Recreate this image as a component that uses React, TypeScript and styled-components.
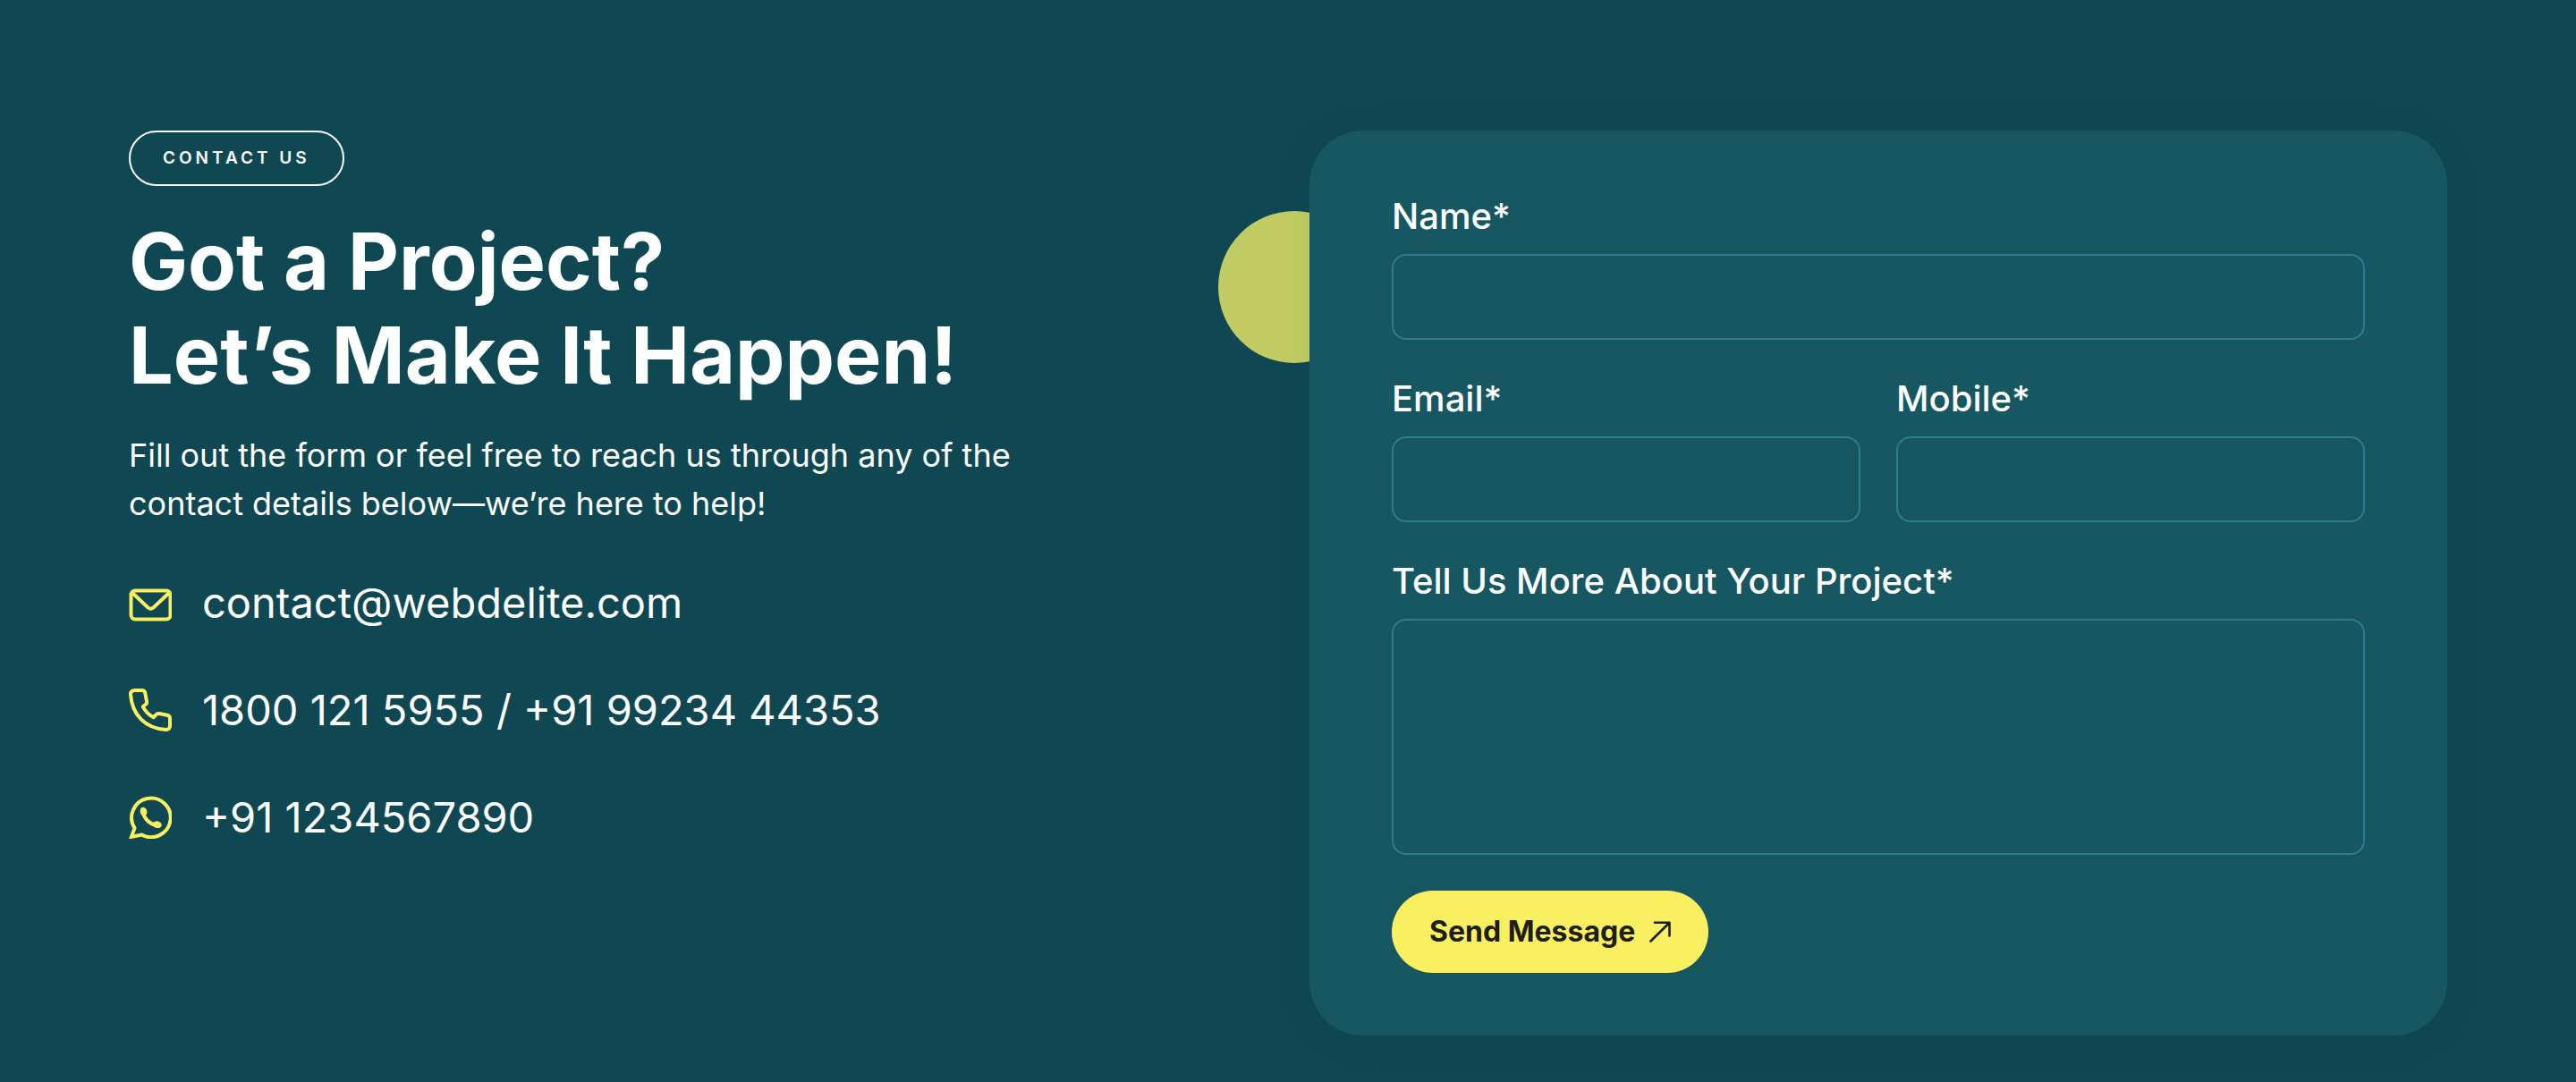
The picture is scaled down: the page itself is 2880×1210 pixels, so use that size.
import React from "react";
import styled, { createGlobalStyle } from "styled-components";

const GlobalStyle = createGlobalStyle`
  *, *::before, *::after { box-sizing: border-box; }
  body {
    margin: 0;
    background: #0f4853;
    color: #fcfdfd;
    font-family: Inter, "Liberation Sans", sans-serif;
  }
`;

const Section = styled.section`
  display: grid;
  grid-template-columns: 1fr 1fr;
  gap: 48px;
  align-items: start;
  min-height: 100vh;
  padding: 146px 5% 52px;
`;

const Intro = styled.div`
  display: flex;
  flex-direction: column;
  align-items: flex-start;
`;

const Tag = styled.span`
  padding: 14px 36px;
  border: 2px solid #fcfdfd;
  border-radius: 32px;
  font-size: 19px;
  line-height: 30px;
  font-weight: 600;
  letter-spacing: 4px;
  text-transform: uppercase;
`;

const Heading = styled.h2`
  margin: 32px 0 32px;
  font-size: 88px;
  line-height: 105px;
  font-weight: 700;
`;

const Lead = styled.p`
  margin: 0;
  max-width: 1020px;
  font-size: 36px;
  line-height: 54px;
`;

const ContactList = styled.ul`
  display: flex;
  flex-direction: column;
  gap: 48px;
  margin: 48px 0 0;
  padding: 0;
  list-style: none;
`;

const ContactRow = styled.li`
  display: flex;
  align-items: center;
  gap: 34px;
  font-size: 47px;
  line-height: 72px;
  font-weight: 400;

  svg {
    flex: none;
    width: 48px;
    height: 48px;
    color: #f8f060;
  }
`;

const ContactLink = styled.a`
  color: inherit;
  text-decoration: none;
`;

const FormArea = styled.div`
  position: relative;
`;

const Disc = styled.span`
  position: absolute;
  top: 90px;
  left: -102px;
  width: 170px;
  height: 170px;
  border-radius: 50%;
  background: #c0cc63;
`;

const Card = styled.form`
  position: relative;
  display: grid;
  grid-template-columns: 1fr 1fr;
  gap: 36px 40px;
  padding: 66px 92px 70px;
  border-radius: 60px;
  background: #165762;
  box-shadow: 0 4px 50px rgba(0, 0, 0, 0.05);
`;

const Field = styled.div<{ $wide?: boolean }>`
  display: flex;
  flex-direction: column;
  gap: 12px;
  grid-column: ${(p) => (p.$wide ? "1 / -1" : "auto")};
`;

const Label = styled.label`
  font-size: 40px;
  line-height: 60px;
  font-weight: 500;
`;

const Input = styled.input`
  width: 100%;
  height: 96px;
  padding: 0 28px;
  border: 2px solid #2a8091;
  border-radius: 16px;
  background: transparent;
  color: inherit;
  font: inherit;
  font-size: 36px;
`;

const TextArea = styled(Input)`
  display: block;
  height: 264px;
  padding: 24px 28px;
  resize: none;
`;

const Send = styled.button`
  display: flex;
  align-items: center;
  justify-self: start;
  gap: 16px;
  margin-top: 4px;
  padding: 22px 42px;
  border: 0;
  border-radius: 46px;
  background: #f8f060;
  color: #1f1d14;
  font: inherit;
  font-size: 32px;
  line-height: 48px;
  font-weight: 700;
  cursor: pointer;

  svg {
    width: 24px;
    height: 24px;
  }
`;

const MailIcon = () => (
  <svg viewBox="0 0 48 48" fill="none" stroke="currentColor" strokeWidth="4" strokeLinejoin="round" aria-hidden="true">
    <rect x="2.5" y="10.5" width="44" height="32" rx="4.5" />
    <path d="M4 13L21.5 29.5Q24.5 32 27.5 29.5L45 13" />
  </svg>
);

const PhoneIcon = () => (
  <svg viewBox="0 0 48 48" fill="none" stroke="currentColor" strokeWidth="4" strokeLinejoin="round" aria-hidden="true">
    <path d="M6.5 2H14.5Q17.5 2 18.2 4.5L20 14.5Q20.4 16.6 18.8 17.8L15.8 20.3C18.5 25.5 22.5 29.5 27.8 32.2L30.5 29.2Q32 27.6 34 28L43 29.8Q46 30.5 46 33.5V41.5Q46 46 41.5 46C18.5 44.5 3.5 29.5 2 6.5Q2 2 6.5 2Z" />
  </svg>
);

const WhatsAppIcon = () => (
  <svg viewBox="0 0 48 48" fill="none" stroke="currentColor" strokeWidth="4" aria-hidden="true">
    <path d="M6.5 36L3 45.8L14.5 43.5A21.8 21.8 0 1 0 6.5 36Z" />
    <path d="M15.8 18C17 25.5 23 31.5 31 33" />
    <g fill="currentColor" stroke="none">
      <ellipse cx="16.5" cy="17.6" rx="3.8" ry="5" transform="rotate(-14 16.5 17.6)" />
      <ellipse cx="31.8" cy="32.2" rx="5" ry="3.8" transform="rotate(14 31.8 32.2)" />
    </g>
  </svg>
);

const ArrowIcon = () => (
  <svg viewBox="0 0 24 24" fill="none" stroke="currentColor" strokeWidth="2.6" strokeLinecap="round" strokeLinejoin="round" aria-hidden="true">
    <path d="M1.5 22.5L22.5 1.8M6 1.8H22.5V16.5" />
  </svg>
);

export default function App() {
  return (
    <>
      <GlobalStyle />
      <Section>
        <Intro>
          <Tag>Contact Us</Tag>
          <Heading>
            Got a Project?
            <br />
            Let’s Make It Happen!
          </Heading>
          <Lead>
            Fill out the form or feel free to reach us through any of the contact details below—we’re here to help!
          </Lead>
          <ContactList>
            <ContactRow>
              <MailIcon />
              <ContactLink href="mailto:contact@webdelite.com">contact@webdelite.com</ContactLink>
            </ContactRow>
            <ContactRow>
              <PhoneIcon />
              <span>
                <ContactLink href="tel:18001215955">1800 121 5955</ContactLink>
                {" / "}
                <ContactLink href="tel:+919923444353">+91 99234 44353</ContactLink>
              </span>
            </ContactRow>
            <ContactRow>
              <WhatsAppIcon />
              <ContactLink href="https://wa.me/911234567890">+91 1234567890</ContactLink>
            </ContactRow>
          </ContactList>
        </Intro>
        <FormArea>
          <Disc />
          <Card onSubmit={(e) => e.preventDefault()}>
            <Field $wide>
              <Label htmlFor="name">Name*</Label>
              <Input id="name" type="text" required />
            </Field>
            <Field>
              <Label htmlFor="email">Email*</Label>
              <Input id="email" type="email" required />
            </Field>
            <Field>
              <Label htmlFor="mobile">Mobile*</Label>
              <Input id="mobile" type="tel" required />
            </Field>
            <Field $wide>
              <Label htmlFor="project">Tell Us More About Your Project*</Label>
              <TextArea as="textarea" id="project" required />
            </Field>
            <Send type="submit">
              Send Message
              <ArrowIcon />
            </Send>
          </Card>
        </FormArea>
      </Section>
    </>
  );
}
